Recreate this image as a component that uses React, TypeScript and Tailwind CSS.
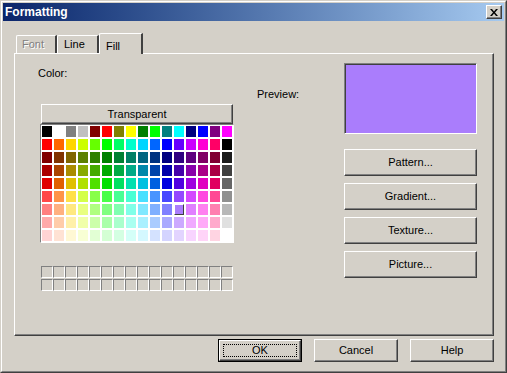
import React from 'react';

const PALETTE: string[][] = [
  ['#000000', '#ffffff', '#808080', '#c0c0c0', '#800000', '#ff0000', '#808000', '#ffff00', '#008000', '#00ff00', '#008080', '#00ffff', '#000080', '#0000ff', '#800080', '#ff00ff'],
  ['#ff0000', '#ff6600', '#ffd500', '#ccff00', '#66ff00', '#00ff00', '#00ff66', '#00ffcc', '#00d5ff', '#0066ff', '#0000ff', '#6600ff', '#cc00ff', '#ff00d5', '#ff0066', '#000000'],
  ['#800000', '#803300', '#806600', '#5c8000', '#2e8000', '#008000', '#008033', '#008066', '#006680', '#003380', '#000080', '#2e0080', '#600080', '#800066', '#800033', '#1c1c1c'],
  ['#aa0000', '#aa4400', '#aa8c00', '#88aa00', '#44aa00', '#00aa00', '#00aa44', '#00aa88', '#0088aa', '#0044aa', '#0000aa', '#4400aa', '#8800aa', '#aa0088', '#aa0044', '#404040'],
  ['#e00000', '#e06000', '#e0c000', '#b0e000', '#50e000', '#00e000', '#00e060', '#00e0b0', '#00c0e0', '#0060e0', '#0000e0', '#5000e0', '#a000e0', '#e000c0', '#e00060', '#666666'],
  ['#ff4848', '#ff9448', '#ffe048', '#d4ff48', '#88ff48', '#48ff48', '#48ff94', '#48ffd4', '#48e0ff', '#4894ff', '#4848ff', '#9448ff', '#d448ff', '#ff48e0', '#ff4894', '#909090'],
  ['#ff8080', '#ffb080', '#ffe880', '#e8ff80', '#b0ff80', '#80ff80', '#80ffb0', '#80ffe8', '#80e8ff', '#80b0ff', '#8080ff', '#aa7dfc', '#e080ff', '#ff80f0', '#ff80b0', '#b8b8b8'],
  ['#ffaaaa', '#ffccaa', '#fff0aa', '#f0ffaa', '#ccffaa', '#aaffaa', '#aaffcc', '#aafff0', '#aaf0ff', '#aaccff', '#aaaaff', '#ccaaff', '#f0aaff', '#ffaaf8', '#ffaacc', '#e0e0e0'],
  ['#ffd4d4', '#ffe2d4', '#fff8d4', '#f8ffd4', '#e2ffd4', '#d4ffd4', '#d4ffe2', '#d4fff8', '#d4f8ff', '#d4e2ff', '#d4d4ff', '#e2d4ff', '#f8d4ff', '#ffd4f8', '#ffd4e2', '#ffffff'],
];

const raised =
  'border border-t-white border-l-white border-r-[#404040] border-b-[#404040] shadow-[inset_-1px_-1px_#808080]';

function Button({ label, className = '' }: { label: string; className?: string }) {
  return (
    <div className={`${raised} flex items-center justify-center bg-[#d4d0c8] text-black ${className}`}>
      {label}
    </div>
  );
}

export default function App() {
  return (
    <div
      className="w-[507px] h-[373px] bg-[#d4d0c8] border border-t-[#d4d0c8] border-l-[#d4d0c8] border-r-[#404040] border-b-[#404040] text-[11px] text-black"
      style={{ fontFamily: '"Liberation Sans", Arial, sans-serif' }}
    >
      <div className="h-full border border-t-white border-l-white border-r-[#808080] border-b-[#808080] p-[1px]">
        {/* Title bar */}
        <div className="h-[18px] flex items-center justify-between bg-gradient-to-r from-[#0a246a] to-[#a6caf0] pl-[2px] pr-[2px]">
          <span className="text-white font-bold text-[12px] leading-none">Formatting</span>
          <div className={`${raised} w-[16px] h-[14px] bg-[#d4d0c8] flex items-center justify-center`}>
            <svg width="8" height="7" viewBox="0 0 8 7">
              <path d="M0 0h2l2 2.5L6 0h2L5 3.5 8 7H6L4 4.5 2 7H0l3-3.5z" fill="#000" />
            </svg>
          </div>
        </div>

        <div className="px-[11px]">
          {/* Tabs */}
          <div className="mt-[12px] h-[20px] flex items-end pl-[2px] relative z-10">
            <div className="w-[41px] h-[18px] border-t border-l border-t-white border-l-white border-r-2 border-r-[#404040] rounded-tl-[2px] flex items-center pl-[5px] text-[#808080] [text-shadow:1px_1px_#ffffff]">
              Font
            </div>
            <div className="w-[42px] h-[18px] border-t border-l border-t-white border-l-white border-r-2 border-r-[#404040] rounded-tl-[2px] flex items-center pl-[6px]">
              Line
            </div>
            <div className="w-[44px] h-[21px] -mb-[1px] bg-[#d4d0c8] border-t border-l border-t-white border-l-white border-r-2 border-r-[#404040] rounded-tl-[2px] flex items-start pt-[4px] pl-[6px]">
              Fill
            </div>
          </div>

          {/* Panel */}
          <div className="w-[480px] h-[283px] border border-t-white border-l-white border-r-[#404040] border-b-[#404040] shadow-[inset_-1px_-1px_#808080] flex items-start">
            {/* Colour column */}
            <div className="ml-[25px] w-[194px] flex flex-col">
              <div className="mt-[12px] -ml-[2px] h-[14px] leading-[14px]">Color:</div>
              <Button label="Transparent" className="mt-[24px] ml-[1px] w-[192px] h-[20px]" />
              <div className="border border-t-[#808080] border-l-[#808080] border-r-white border-b-white bg-white p-[1px] grid grid-cols-[repeat(16,10px)] auto-rows-[11px] gap-[2px] w-[194px]">
                {PALETTE.flatMap((row, r) =>
                  row.map((c, i) => (
                    <div
                      key={`${r}-${i}`}
                      className={r === 6 && i === 11 ? 'border border-t-white border-l-white border-r-[#404040] border-b-[#404040]' : ''}
                      style={{ backgroundColor: c }}
                    />
                  ))
                )}
              </div>
              <div className="mt-[23px] ml-[1px] grid grid-cols-[repeat(16,12px)] auto-rows-[12px] gap-y-[1px]">
                {Array.from({ length: 32 }).map((_, i) => (
                  <div key={i} className="border border-t-[#808080] border-l-[#808080] border-r-white border-b-white" />
                ))}
              </div>
            </div>

            {/* Preview label */}
            <div className="w-[110px] pl-[23px] mt-[33px] h-[14px] leading-[14px]">Preview:</div>

            {/* Preview + fill effects */}
            <div className="w-[133px] flex flex-col">
              <div className="mt-[9px] h-[71px] border border-t-[#808080] border-l-[#808080] border-r-white border-b-white shadow-[inset_1px_1px_#404040] bg-[#aa7dfc]" />
              <div className="mt-[15px] flex flex-col gap-[7px]">
                <Button label="Pattern..." className="h-[27px]" />
                <Button label="Gradient..." className="h-[27px]" />
                <Button label="Texture..." className="h-[27px]" />
                <Button label="Picture..." className="h-[27px]" />
              </div>
            </div>
          </div>

          {/* Dialog buttons */}
          <div className="mt-[3px] w-[480px] flex justify-end gap-[12px]">
            <div className="w-[84px] h-[23px] border border-black">
              <div className={`${raised} h-full flex items-center justify-center p-[3px]`}>
                <div className="w-full h-full border border-dotted border-black flex items-center justify-center">OK</div>
              </div>
            </div>
            <Button label="Cancel" className="w-[84px] h-[23px]" />
            <Button label="Help" className="w-[84px] h-[23px]" />
          </div>
        </div>
      </div>
    </div>
  );
}
